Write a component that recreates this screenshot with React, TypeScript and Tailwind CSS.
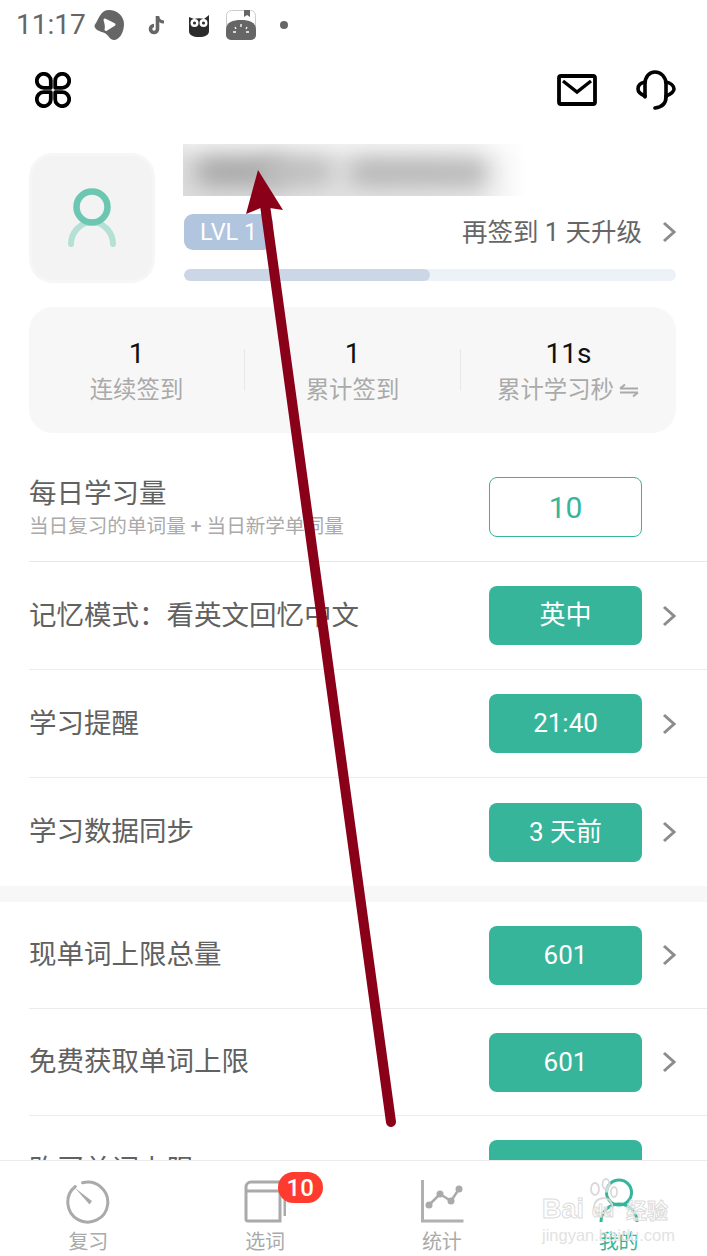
import React from 'react';

const fontStack = "font-['Roboto','Noto_Sans_CJK_SC',sans-serif]";

function Chevron({ className = '' }: { className?: string }) {
  return (
    <svg width="14" height="24" viewBox="0 0 14 24" fill="none" className={className}>
      <path d="M2 3l10 9-10 9" stroke="#8c8c8c" strokeWidth="3" />
    </svg>
  );
}

function StatusIcons() {
  return (
    <div className="flex items-center">
      <svg width="30" height="30" viewBox="0 0 30 30" className="ml-[8px]">
        <path d="M15 0c8 0 15 6 15 14 0 9-5 16-10 16-4 0-5-4-8-6-2-2-7-2-10-5-2-2-2-4 0-6C5 8 7 0 15 0z" fill="#666" />
        <path d="M11 10l9 4.500-8 5c1-3 0-6-1-9.500z" fill="#fff" stroke="#fff" strokeWidth="3" strokeLinejoin="round" />
      </svg>
      <svg width="18" height="20" viewBox="0 0 18 20" className="ml-[24px]">
        <path d="M9.500 1v13a3.500 3.500 0 1 1-3.500-3.500" fill="none" stroke="#666" strokeWidth="3.600" />
        <path d="M9.500 2c1 3 3 5 6.500 5" fill="none" stroke="#666" strokeWidth="3" />
      </svg>
      <svg width="22" height="24" viewBox="0 0 22 24" className="ml-[22px]">
        <path d="M1 4l5 2c3-1 7-1 10 0l5-4v16c0 4-4 6-10 6S1 22 1 18z" fill="#2b2b2b" />
        <circle cx="6.500" cy="10" r="4" fill="#fff" />
        <circle cx="15.500" cy="10" r="4" fill="#fff" />
        <circle cx="6.500" cy="10" r="1.600" fill="#333" />
        <circle cx="15.500" cy="10" r="1.600" fill="#333" />
      </svg>
      <svg width="30" height="30" viewBox="0 0 30 30" className="ml-[16px]">
        <rect x="0.500" y="0.500" width="29" height="29" rx="5" fill="#fff" stroke="#ccc" />
        <path d="M0 20C0 12 7 10 15 10s15 2 15 10v5a5 5 0 0 1-5 5H5a5 5 0 0 1-5-5z" fill="#666" />
        <path d="M18 0h6v7l-3-2-3 2z" fill="#666" />
        <path d="M15 14v3M9 17l1 2M21 17l-1 2M7 22h3M20 22h3" stroke="#fff" strokeWidth="1.300" />
      </svg>
      <div className="ml-[24px] h-2 w-2 rounded-full bg-[#666]" />
    </div>
  );
}

function StatCell({ value, label, extra }: { value: string; label: string; extra?: boolean }) {
  return (
    <div className="flex flex-1 flex-col items-center pt-[3px]">
      <span className="text-[28px] leading-[36px] text-[#111]">{value}</span>
      <span className="flex items-center text-[23.400px] leading-[36px] text-[#aaa]">
        {label}
        {extra && (
          <svg width="22" height="16" viewBox="0 0 22 16" className="ml-[4px]">
            <path d="M2 6.500h18M2 6.500l5-4M20 10.500H2M20 10.500l-5 4" stroke="#aaa" strokeWidth="2" fill="none" />
          </svg>
        )}
      </span>
    </div>
  );
}

function Row({ title, value, className }: { title: string; value: string; className: string }) {
  return (
    <div className={`ml-[29px] flex items-center justify-between pr-[31px] ${className}`}>
      <span className="text-[27.500px] text-[#616161]">{title}</span>
      <div className="flex items-center">
        <div className="flex h-[59px] w-[153px] items-center justify-center rounded-[8px] bg-[#36b59a] text-[26px] text-white">
          {value}
        </div>
        <Chevron className="ml-[20px]" />
      </div>
    </div>
  );
}

function TabItem({ label, active, children }: { label: string; active?: boolean; children: React.ReactNode }) {
  return (
    <div className="relative flex flex-col items-center pt-[19px]">
      <div className="flex h-[44px] w-[60px] items-center justify-center">{children}</div>
      <span className={`mt-[4px] text-[20px] leading-[28px] ${active ? 'text-[#36b59a]' : 'text-[#aaa]'}`}>{label}</span>
    </div>
  );
}

export default function App() {
  return (
    <div className={`relative flex h-[1256px] w-[707px] flex-col overflow-hidden bg-white ${fontStack}`}>
      {/* status bar */}
      <div className="flex h-[50px] shrink-0 items-center pl-[16px]">
        <span className="text-[28px] leading-none text-[#666]">11:17</span>
        <StatusIcons />
      </div>

      {/* header */}
      <div className="flex h-[80px] shrink-0 items-center justify-between pl-[35px] pr-[31px]">
        <svg width="36" height="36" viewBox="0 0 36 36" fill="none" stroke="#000" strokeWidth="3.800" strokeLinejoin="round">
          <path d="M15.800 15.800H9a7 7 0 1 1 6.800-6.800zM20.200 15.800H27A7 7 0 1 0 20.200 9zM15.800 20.200H9a7 7 0 1 0 6.800 6.800zM20.200 20.200H27a7 7 0 1 1-6.800 6.800z" />
        </svg>
        <div className="flex items-center gap-[39px]">
          <svg width="40" height="32" viewBox="0 0 40 32" fill="none" stroke="#000">
            <rect x="2" y="2" width="36" height="28" rx="2" strokeWidth="3.800" />
            <path d="M6 7l14 11L34 7" strokeWidth="3.400" />
          </svg>
          <svg width="40" height="40" viewBox="0 0 40 40" fill="none" stroke="#000" strokeWidth="3.600" strokeLinecap="round">
            <path d="M9 27V14C9 7 13 2 19 2s11 5 11 12v13" />
            <path d="M9 12C4 13 2 16 2 19s2 5 7 7M30 12c5 1 8 4 8 7s-3 5-8 7" />
            <path d="M30 27c0 7-4 10-11 11" />
          </svg>
        </div>
      </div>

      {/* scrolling content */}
      <div className="min-h-0 flex-1 overflow-hidden">
        {/* profile */}
        <div className="flex items-start pl-[29px] pr-[31px] pt-[14px]">
          <div className="mt-[9px] flex h-[130px] w-[126px] shrink-0 items-center justify-center rounded-[24px] border-[3px] border-[#f6f6f6] bg-[#f3f3f3]">
            <svg width="48" height="60" viewBox="0 0 48 60" fill="none">
              <path d="M3 56c0-11 9-22 21-22s21 11 21 22" stroke="#b4e0d5" strokeWidth="6" strokeLinecap="round" />
              <circle cx="24" cy="19" r="15.500" stroke="#6cc7b2" strokeWidth="6.500" />
            </svg>
          </div>
          <div className="ml-[29px] min-w-0 flex-1">
            <div className="relative -ml-px h-[52px] w-[342px] overflow-hidden bg-linear-to-r from-[#dcdcdc] via-[#e8e8e8] via-85% to-white">
              <div className="absolute left-[-6px] top-[-14px] h-[22px] w-[360px] bg-white opacity-70 blur-[9px]" />
              <div className="absolute left-[12px] top-[14px] h-[28px] w-[90px] rounded-full bg-[#a6a6a6] blur-[11px]" />
              <div className="absolute left-[80px] top-[14px] h-[28px] w-[70px] rounded-full bg-[#bcbcbc] blur-[11px]" />
              <div className="absolute left-[165px] top-[16px] h-[26px] w-[140px] rounded-full bg-[#b4b4b4] blur-[11px]" />
            </div>
            <div className="mt-[18px] flex h-[36px] items-center">
              <div className="flex h-[36px] w-[89px] items-center rounded-[9px] bg-[#b1c5de] pl-[16px] pt-px text-[23.500px] text-white">LVL 1</div>
              <span className="ml-auto text-[25.500px] text-[#666]">再签到 1 天升级</span>
              <Chevron className="ml-[20px]" />
            </div>
            <div className="mt-[19px] h-[12px] w-full overflow-hidden rounded-full bg-[#edf1f8]">
              <div className="h-full w-[246px] rounded-full bg-[#cbd7e7]" />
            </div>
          </div>
        </div>

        {/* stats */}
        <div className="ml-[29px] mt-[24px] flex h-[126px] w-[647px] items-center rounded-[24px] bg-[#f7f7f7]">
          <StatCell value="1" label="连续签到" />
          <div className="h-[42px] w-px bg-[#e8e8e8]" />
          <StatCell value="1" label="累计签到" />
          <div className="h-[42px] w-px bg-[#e8e8e8]" />
          <StatCell value="11s" label="累计学习秒" extra />
        </div>

        {/* daily amount */}
        <div className="ml-[29px] mt-[20px] flex h-[109px] items-center justify-between border-b border-[#e8e8e8] pr-[65px]">
          <div className="flex flex-col pt-[2px]">
            <span className="text-[27.500px] leading-[36px] text-[#616161]">每日学习量</span>
            <span className="mt-px text-[19.600px] leading-[28px] text-[#aaa]">当日复习的单词量 + 当日新学单词量</span>
          </div>
          <div className="flex h-[60px] w-[153px] items-center justify-center rounded-[8px] border border-[#36b59a] text-[30px] text-[#36b59a]">
            10
          </div>
        </div>
        <Row title="记忆模式：看英文回忆中文" value="英中" className="h-[108px] border-b border-[#ececec]" />
        <Row title="学习提醒" value="21:40" className="h-[108px] border-b border-[#ececec]" />
        <Row title="学习数据同步" value="3 天前" className="h-[108px]" />
        <div className="h-[16px] bg-[#f7f7f7]" />
        <Row title="现单词上限总量" value="601" className="h-[107px] border-b border-[#ececec]" />
        <Row title="免费获取单词上限" value="601" className="h-[107px] border-b border-[#ececec]" />
        <Row title="购买单词上限" value="" className="h-[107px]" />
      </div>

      {/* tab bar */}
      <div className="relative z-10 grid h-[96px] shrink-0 grid-cols-4 border-t border-[#ececec] bg-white">
        <TabItem label="复习">
          <svg width="44" height="44" viewBox="0 0 44 44" fill="none">
            <path d="M16.600 2.800A20 20 0 1 1 9.300 6.500" stroke="#aaa" strokeWidth="3" strokeLinecap="round" />
            <path d="M9 8l17 13-2.500 3.500z" fill="#aaa" />
          </svg>
        </TabItem>
        <TabItem label="选词">
          <svg width="42" height="44" viewBox="0 0 42 44" fill="none" stroke="#aaa" strokeWidth="3">
            <path d="M36 41H4a2 2 0 0 1-2-2V7a5 5 0 0 1 5-5h29v39z" />
            <path d="M2 11h34M41 12v24" />
          </svg>
          <div className="absolute left-[101px] top-[11px] flex h-[31px] w-[45px] items-center justify-center rounded-full bg-[#ff3b30] text-[24px] font-medium text-white">10</div>
        </TabItem>
        <TabItem label="统计">
          <svg width="44" height="44" viewBox="0 0 44 44" fill="none">
            <path d="M2.500 0v41h41" stroke="#b0b0b0" strokeWidth="3" />
            <path d="M9 25l11-11 11 7 8-12" stroke="#aaa" strokeWidth="2.500" />
            <circle cx="9" cy="25" r="3.500" fill="#aaa" />
            <circle cx="20" cy="14" r="3.500" fill="#aaa" />
            <circle cx="31" cy="21" r="3.500" fill="#aaa" />
            <circle cx="39" cy="9" r="3.500" fill="#aaa" />
          </svg>
        </TabItem>
        <TabItem label="我的" active>
          <svg width="40" height="46" viewBox="0 0 40 46" fill="none" strokeWidth="3" className="-mt-[3px]">
            <circle cx="20" cy="14.500" r="12.500" stroke="#36b59a" />
            <path d="M11.200 5.600a12.500 12.500 0 0 0-3.700 8.900" stroke="#b4e0d5" />
            <path d="M2 44c0-10 8-18 18-18s18 8 18 18" stroke="#36b59a" />
          </svg>
        </TabItem>
      </div>

      {/* baidu watermark */}
      <div className="pointer-events-none absolute left-[542px] top-[1178px] z-20 flex w-[130px] flex-col font-['Liberation_Sans',sans-serif]">
        <div className="flex h-[44px] items-end">
          <span className="text-[27px] font-bold leading-[26px] text-white/60 [-webkit-text-stroke:1px_#dcdcdc]">Bai</span>
          <div className="relative h-[44px] w-[36px]">
            <svg width="32" height="38" viewBox="0 0 32 38" fill="none" stroke="#d8d8d8" strokeWidth="1.800" className="absolute left-[2px] top-0">
              <ellipse cx="9" cy="11" rx="4" ry="6" />
              <ellipse cx="20" cy="6" rx="3.500" ry="5" />
              <ellipse cx="28" cy="14" rx="3" ry="5" />
              <path d="M8 28c2-9 14-11 18-2 2 6-2 10-9 9-5 0-11 0-9-7z" />
            </svg>
            <span className="absolute bottom-[2px] left-[8px] text-[18px] font-bold leading-none text-white/60 [-webkit-text-stroke:1px_#dcdcdc]">du</span>
          </div>
          <span className="ml-[6px] font-['Noto_Sans_CJK_SC',sans-serif] text-[21px] font-bold leading-[26px] text-white/60 [-webkit-text-stroke:1px_#dcdcdc]">经验</span>
        </div>
        <span className="mt-[2px] text-[16.500px] leading-[22px] text-[#e2e2e2]">jingyan.baidu.com</span>
      </div>

      {/* annotation arrow */}
      <svg width="707" height="1256" viewBox="0 0 707 1256" className="pointer-events-none absolute left-0 top-0 z-30">
        <path d="M265 205L391 1122" stroke="#8a0019" strokeWidth="10" strokeLinecap="round" />
        <polygon points="258,170 283,210 263,207 246,214" fill="#8a0019" />
      </svg>
    </div>
  );
}
